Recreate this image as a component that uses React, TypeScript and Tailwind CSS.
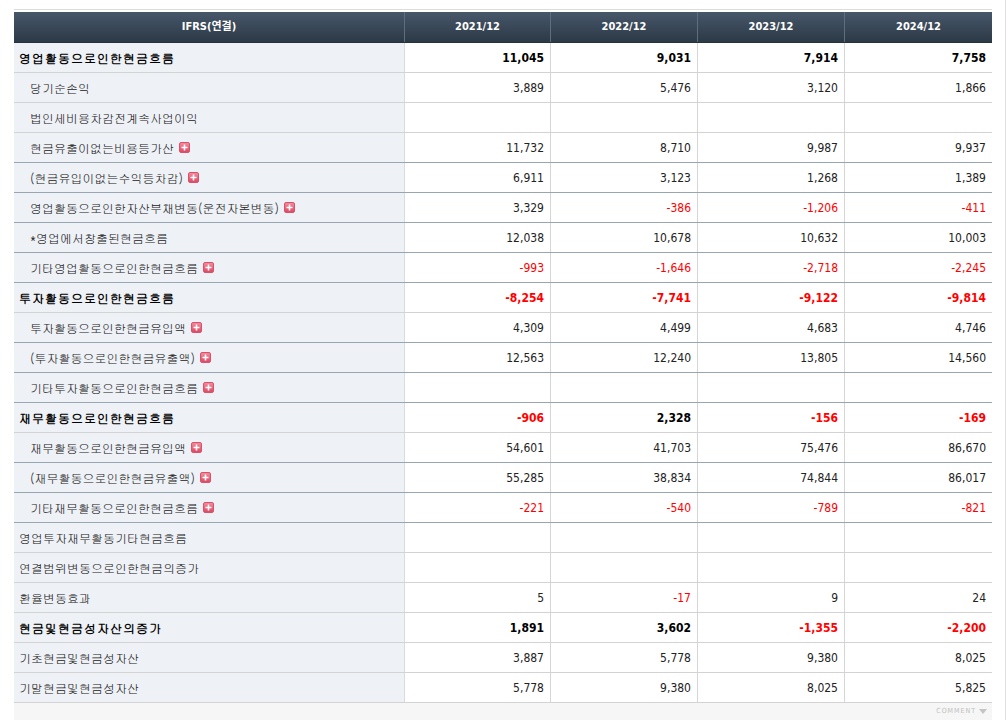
import React from "react";

type Row = {
  label: string;
  values: string[];
  kind: "bold" | "sub" | "plain";
  plus?: boolean;
  dark?: boolean; // darker line under the row
};

const rows: Row[] = [
  { label: "영업활동으로인한현금흐름", kind: "bold", values: ["11,045", "9,031", "7,914", "7,758"] },
  { label: "당기순손익", kind: "sub", values: ["3,889", "5,476", "3,120", "1,866"] },
  { label: "법인세비용차감전계속사업이익", kind: "sub", values: ["", "", "", ""] },
  { label: "현금유출이없는비용등가산", kind: "sub", plus: true, dark: true, values: ["11,732", "8,710", "9,987", "9,937"] },
  { label: "(현금유입이없는수익등차감)", kind: "sub", plus: true, dark: true, values: ["6,911", "3,123", "1,268", "1,389"] },
  { label: "영업활동으로인한자산부채변동(운전자본변동)", kind: "sub", plus: true, dark: true, values: ["3,329", "-386", "-1,206", "-411"] },
  { label: "*영업에서창출된현금흐름", kind: "sub", dark: true, values: ["12,038", "10,678", "10,632", "10,003"] },
  { label: "기타영업활동으로인한현금흐름", kind: "sub", plus: true, dark: true, values: ["-993", "-1,646", "-2,718", "-2,245"] },
  { label: "투자활동으로인한현금흐름", kind: "bold", values: ["-8,254", "-7,741", "-9,122", "-9,814"] },
  { label: "투자활동으로인한현금유입액", kind: "sub", plus: true, dark: true, values: ["4,309", "4,499", "4,683", "4,746"] },
  { label: "(투자활동으로인한현금유출액)", kind: "sub", plus: true, dark: true, values: ["12,563", "12,240", "13,805", "14,560"] },
  { label: "기타투자활동으로인한현금흐름", kind: "sub", plus: true, dark: true, values: ["", "", "", ""] },
  { label: "재무활동으로인한현금흐름", kind: "bold", values: ["-906", "2,328", "-156", "-169"] },
  { label: "재무활동으로인한현금유입액", kind: "sub", plus: true, dark: true, values: ["54,601", "41,703", "75,476", "86,670"] },
  { label: "(재무활동으로인한현금유출액)", kind: "sub", plus: true, dark: true, values: ["55,285", "38,834", "74,844", "86,017"] },
  { label: "기타재무활동으로인한현금흐름", kind: "sub", plus: true, dark: true, values: ["-221", "-540", "-789", "-821"] },
  { label: "영업투자재무활동기타현금흐름", kind: "plain", values: ["", "", "", ""] },
  { label: "연결범위변동으로인한현금의증가", kind: "plain", values: ["", "", "", ""] },
  { label: "환율변동효과", kind: "plain", values: ["5", "-17", "9", "24"] },
  { label: "현금및현금성자산의증가", kind: "bold", values: ["1,891", "3,602", "-1,355", "-2,200"] },
  { label: "기초현금및현금성자산", kind: "plain", values: ["3,887", "5,778", "9,380", "8,025"] },
  { label: "기말현금및현금성자산", kind: "plain", values: ["5,778", "9,380", "8,025", "5,825"] },
];

const years = ["2021/12", "2022/12", "2023/12", "2024/12"];

const korean = { fontFamily: "Gulim, 'Noto Sans CJK KR', 'DejaVu Sans', sans-serif" };
const num = {
  fontFamily: "'DejaVu Sans Condensed', 'DejaVu Sans', 'Noto Sans CJK KR', sans-serif",
  fontStretch: "condensed" as const,
};

const PlusIcon = () => (
  <span className="ml-[5px] inline-flex h-[11px] w-[11px] items-center justify-center rounded-[2px] border border-[#d8526b] bg-gradient-to-b from-[#f28a9c] to-[#dc4a65]">
    <svg width="7" height="7" viewBox="0 0 7 7">
      <path d="M3.5 0.5v6M0.5 3.5h6" stroke="#fff" strokeWidth="1.6" />
    </svg>
  </span>
);

const App = () => {
  return (
    <div className="flex h-[720px] w-[1008px] bg-white">
      <div className="flex w-[992px] flex-col pl-[14px]">
        <div className="h-[9px]" />
        <div className="h-px bg-[#dcdcdc]" />
        <div className="h-[2px]" />

        {/* 헤더 */}
        <div
          className="grid h-[31px] grid-cols-[391px_146px_147px_147px_147px] border-b border-[#27323c] bg-gradient-to-b from-[#47576a] to-[#2c3946] text-white"
          style={num}
        >
          <div className="flex items-center justify-center border-r border-[#5f6e7c] text-[11px] font-bold">
            IFRS(연결)
          </div>
          {years.map((y, i) => (
            <div
              key={y}
              className={
                "flex items-center justify-center text-[11px] font-bold " +
                (i < 3 ? "border-r border-[#5f6e7c]" : "")
              }
            >
              {y}
            </div>
          ))}
        </div>

        {/* 본문 */}
        {rows.map((row, idx) => (
          <div
            key={row.label + idx}
            className={
              "grid h-[30px] grid-cols-[391px_146px_147px_147px_147px] border-b " +
              (row.dark ? "border-[#98a6b1]" : "border-[#d3d3d3]")
            }
          >
            <div
              className={
                "flex items-center border-r border-[#d8dbe0] bg-[#eef1f6] text-[12px] " +
                (row.kind === "sub" ? "pl-[16px] text-[#222]" : "pl-[5px] text-[#222]") +
                (row.kind === "bold" ? " font-bold tracking-[1px] text-black" : "")
              }
              style={korean}
            >
              {row.label}
              {row.plus && <PlusIcon />}
            </div>
            {row.values.map((v, i) => (
              <div
                key={i}
                className={
                  "flex items-center justify-end pr-[6px] text-[12px] " +
                  (i < 3 ? "border-r border-[#d6d6d6] " : "") +
                  (v.startsWith("-") ? "text-[#f00] " : row.kind === "bold" ? "text-black " : "text-[#222] ") +
                  (row.kind === "bold" ? "font-bold" : "")
                }
                style={num}
              >
                {v}
              </div>
            ))}
          </div>
        ))}

        {/* 하단 */}
        <div className="flex h-[17px] items-center justify-end bg-[#f6f6f6] pr-[5px]">
          <span className="text-[7px] tracking-[1px] text-[#c0c0c0]" style={num}>
            COMMENT
          </span>
          <svg className="ml-[3px]" width="8" height="5" viewBox="0 0 8 5">
            <path d="M0 0h8L4 5z" fill="#c4c4c4" />
          </svg>
        </div>
      </div>
      <div className="w-[13px]" />
      <div className="w-px bg-[#dedede]" />
    </div>
  );
};

export default App;
